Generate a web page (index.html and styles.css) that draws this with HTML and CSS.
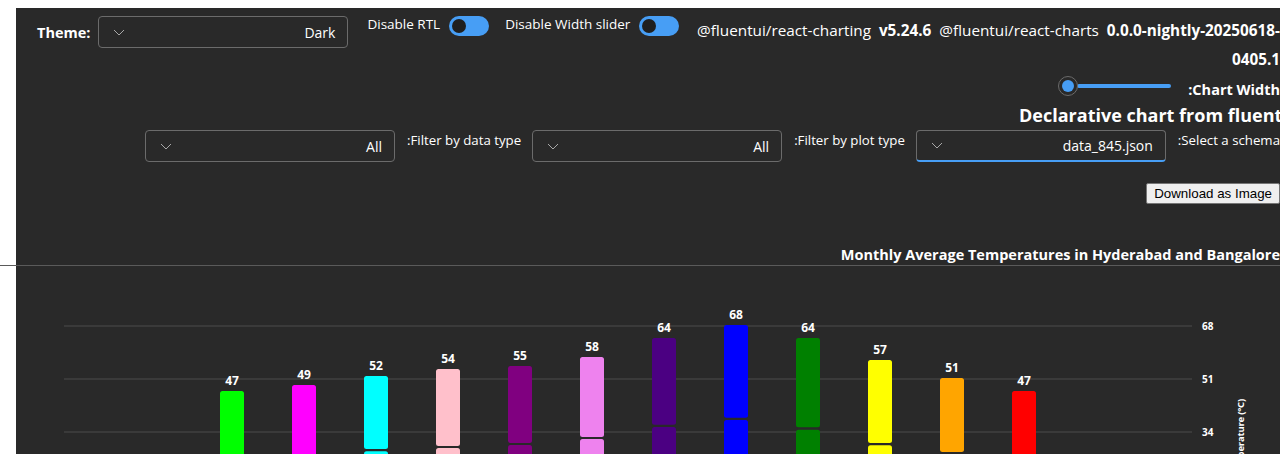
FILE: index.html
```html
<!DOCTYPE html>
<html lang="en">
<head>
<meta charset="utf-8">
<title>Declarative chart</title>
<link rel="stylesheet" href="styles.css">
</head>
<body>
<div class="page">
  <div class="row top-row">
    <div class="theme">
      <span class="bold-label">Theme:</span>
      <div class="dropdown">
        <svg class="chev" width="12" height="7" viewBox="0 0 12 7"><path d="M1 1 L6 6 L11 1" fill="none" stroke="#a8a8a8" stroke-width="1"/></svg>
        <span class="dd-value">Dark</span>
      </div>
    </div>
    <div class="toggle-group">
      <span class="toggle-label">Disable RTL</span>
      <span class="switch"><span class="knob"></span></span>
    </div>
    <div class="toggle-group">
      <span class="toggle-label">Disable Width slider</span>
      <span class="switch"><span class="knob"></span></span>
    </div>
    <div class="versions">@fluentui/react-charting&nbsp; <b>v5.24.6</b>&nbsp; @fluentui/react-charts&nbsp; <b>0.0.0-nightly-20250618-0405.1</b></div>
  </div>

  <div class="row slider-row">
    <div class="slider">
      <span class="thumb"><span class="thumb-dot"></span></span>
      <span class="track"></span>
    </div>
    <span class="bold-label width-label">:Chart Width</span>
  </div>

  <div class="row title-row">
    <div class="main-title">Declarative chart from fluentui/react-charting</div>
  </div>

  <div class="row filter-row">
    <div class="dropdown">
      <svg class="chev" width="12" height="7" viewBox="0 0 12 7"><path d="M1 1 L6 6 L11 1" fill="none" stroke="#a8a8a8" stroke-width="1"/></svg>
      <span class="dd-value">All</span>
    </div>
    <span class="filter-label">:Filter by data type</span>
    <div class="dropdown">
      <svg class="chev" width="12" height="7" viewBox="0 0 12 7"><path d="M1 1 L6 6 L11 1" fill="none" stroke="#a8a8a8" stroke-width="1"/></svg>
      <span class="dd-value">All</span>
    </div>
    <span class="filter-label">:Filter by plot type</span>
    <div class="dropdown focused">
      <svg class="chev" width="12" height="7" viewBox="0 0 12 7"><path d="M1 1 L6 6 L11 1" fill="none" stroke="#a8a8a8" stroke-width="1"/></svg>
      <span class="dd-value">data_845.json</span>
    </div>
    <span class="filter-label last">:Select a schema</span>
  </div>

  <div class="row download-row">
    <button class="download-btn" type="button">Download as Image</button>
  </div>

  <div class="row chart-title-row">
    <div class="chart-title">Monthly Average Temperatures in Hyderabad and Bangalore</div>
  </div>
  <div class="divider"></div>

  <svg class="chart" width="1264" height="200" viewBox="0 0 1264 200">
    <g class="grid" stroke="#4d4d4d" stroke-width="1.2">
      <line x1="48" y1="60" x2="1176" y2="60"/>
      <line x1="48" y1="113" x2="1176" y2="113"/>
      <line x1="48" y1="166" x2="1176" y2="166"/>
    </g>
    <g class="ticks" fill="#ffffff" font-size="10" font-weight="700">
      <text x="1186" y="63.5">68</text>
      <text x="1186" y="116.5">51</text>
      <text x="1186" y="169.5">34</text>
    </g>
    <text class="axis-title" transform="translate(1228 133) rotate(-90)" text-anchor="end" fill="#ffffff" font-size="9.5" font-weight="700" letter-spacing="-0.2">Temperature (°C)</text>

    <g class="bars">
      <rect x="204" y="125" width="24" height="90" rx="2.5" fill="#00ff00"/>
      <rect x="276" y="119" width="24" height="96" rx="2.5" fill="#ff00ff"/>
      <rect x="348" y="110" width="24" height="73" rx="2.5" fill="#00ffff"/>
      <rect x="348" y="185.3" width="24" height="30" rx="2.5" fill="#00ffff"/>
      <rect x="420" y="103" width="24" height="77" rx="2.5" fill="#ffc0cb"/>
      <rect x="420" y="182" width="24" height="30" rx="2.5" fill="#ffc0cb"/>
      <rect x="492" y="100" width="24" height="77" rx="2.5" fill="#800080"/>
      <rect x="492" y="179" width="24" height="30" rx="2.5" fill="#800080"/>
      <rect x="564" y="91" width="24" height="80" rx="2.5" fill="#ee82ee"/>
      <rect x="564" y="173" width="24" height="40" rx="2.5" fill="#ee82ee"/>
      <rect x="636" y="72" width="24" height="86.7" rx="2.5" fill="#4b0082"/>
      <rect x="636" y="161" width="24" height="50" rx="2.5" fill="#4b0082"/>
      <rect x="708" y="59" width="24" height="92.7" rx="2.5" fill="#0000ff"/>
      <rect x="708" y="154" width="24" height="50" rx="2.5" fill="#0000ff"/>
      <rect x="780" y="72" width="24" height="89.3" rx="2.5" fill="#008000"/>
      <rect x="780" y="163.7" width="24" height="50" rx="2.5" fill="#008000"/>
      <rect x="852" y="94" width="24" height="83" rx="2.5" fill="#ffff00"/>
      <rect x="852" y="179.3" width="24" height="40" rx="2.5" fill="#ffff00"/>
      <rect x="924" y="112" width="24" height="74" rx="2.5" fill="#ffa500"/>
      <rect x="924" y="188.5" width="24" height="30" rx="2.5" fill="#ffa500"/>
      <rect x="996" y="125" width="24" height="90" rx="2.5" fill="#ff0000"/>
    </g>
    <g class="labels" fill="#ffffff" font-size="12" font-weight="700" text-anchor="middle">
      <text x="216" y="119">47</text>
      <text x="288" y="113">49</text>
      <text x="360" y="104">52</text>
      <text x="432" y="97">54</text>
      <text x="504" y="94">55</text>
      <text x="576" y="85">58</text>
      <text x="648" y="66">64</text>
      <text x="720" y="53">68</text>
      <text x="792" y="66">64</text>
      <text x="864" y="88">57</text>
      <text x="936" y="106">51</text>
      <text x="1008" y="119">47</text>
    </g>
  </svg>
</div>
</body>
</html>
```

FILE: styles.css
```css
html, body {
  margin: 0;
  padding: 0;
  background: #ffffff;
  overflow: hidden;
}
body {
  padding: 8px 0 0 16px;
  height: 454px;
  box-sizing: border-box;
}
.page {
  background: #292929;
  color: #ffffff;
  font-family: "Open Sans", "Noto Sans", sans-serif;
  font-size: 14px;
  height: 100%;
  display: flex;
  flex-direction: column;
}
.page > * {
  flex-shrink: 0;
}
.row {
  display: flex;
  flex-wrap: nowrap;
}
.top-row {
  padding: 8px 0 0 21px;
  align-items: flex-start;
  height: 66px;
  box-sizing: border-box;
}
.theme {
  display: flex;
  align-items: center;
  gap: 8px;
}
.bold-label {
  font-weight: 700;
  font-size: 14.5px;
}
.dropdown {
  width: 250px;
  height: 32px;
  box-sizing: border-box;
  border: 1px solid #6b6b6b;
  border-radius: 4px;
  display: flex;
  align-items: center;
  justify-content: space-between;
  padding: 0 12px 0 14px;
  flex-shrink: 0;
}
.dropdown.focused {
  border-bottom: 2px solid #479ef5;
}
.chev {
  display: block;
}
.dd-value {
  font-size: 14px;
}
.toggle-group {
  display: flex;
  align-items: center;
  gap: 9px;
  margin-left: 19px;
  height: 20px;
}
.toggle-group + .toggle-group {
  margin-left: 16px;
}
.toggle-label {
  font-size: 13.5px;
  line-height: 20px;
  margin-top: -4px;
}
.switch {
  width: 40px;
  height: 20px;
  border-radius: 10px;
  background: #479ef5;
  display: flex;
  align-items: center;
  padding-left: 3px;
  box-sizing: border-box;
}
.knob {
  width: 14px;
  height: 14px;
  border-radius: 50%;
  background: #1f1f1f;
}
.versions {
  margin-left: 16px;
  flex: 1;
  text-align: right;
  line-height: 29px;
  font-size: 15.3px;
  white-space: normal;
}
.versions b {
  font-weight: 700;
}
.slider-row {
  justify-content: flex-end;
  align-items: flex-start;
  height: 28px;
}
.slider {
  display: flex;
  align-items: center;
  margin-top: 2px;
  height: 20px;
}
.thumb {
  width: 20px;
  height: 20px;
  border-radius: 50%;
  box-sizing: border-box;
  border: 1px solid #6b6b6b;
  background: #292929;
  display: flex;
  align-items: center;
  justify-content: center;
  position: relative;
  z-index: 1;
}
.thumb-dot {
  width: 12px;
  height: 12px;
  border-radius: 50%;
  background: #479ef5;
}
.track {
  width: 94px;
  height: 4px;
  border-radius: 2px;
  background: #479ef5;
  margin-left: -1px;
}
.width-label {
  margin-left: 17px;
  margin-top: 6px;
  line-height: 20px;
}
.title-row {
  justify-content: flex-end;
  height: 28px;
}
.main-title {
  width: 261px;
  overflow: hidden;
  white-space: nowrap;
  font-weight: 700;
  font-size: 18px;
  line-height: 26px;
}
.filter-row {
  padding-left: 129px;
  align-items: flex-start;
  height: 32px;
}
.filter-label {
  margin: 0 11px 0 12px;
  line-height: 20px;
  white-space: nowrap;
  font-size: 13.25px;
}
.filter-label.last {
  margin-right: 0;
}
.download-row {
  justify-content: flex-end;
  margin-top: 21px;
}
.download-btn {
  font-family: "Liberation Sans", Arial, sans-serif;
  font-size: 13.33px;
  color: #000000;
  background: #efefef;
  border: 1px solid #767676;
  border-radius: 2px;
  padding: 1px 7px;
  height: 21px;
}
.chart-title-row {
  justify-content: flex-end;
  margin-top: 41px;
}
.chart-title {
  font-weight: 700;
  font-size: 14.5px;
  line-height: 20px;
  white-space: nowrap;
}
.divider {
  height: 1px;
  background: #5a5a5a;
  margin-left: -16px;
}
.chart {
  display: block;
  font-family: "Open Sans", "Noto Sans", sans-serif;
}
```
